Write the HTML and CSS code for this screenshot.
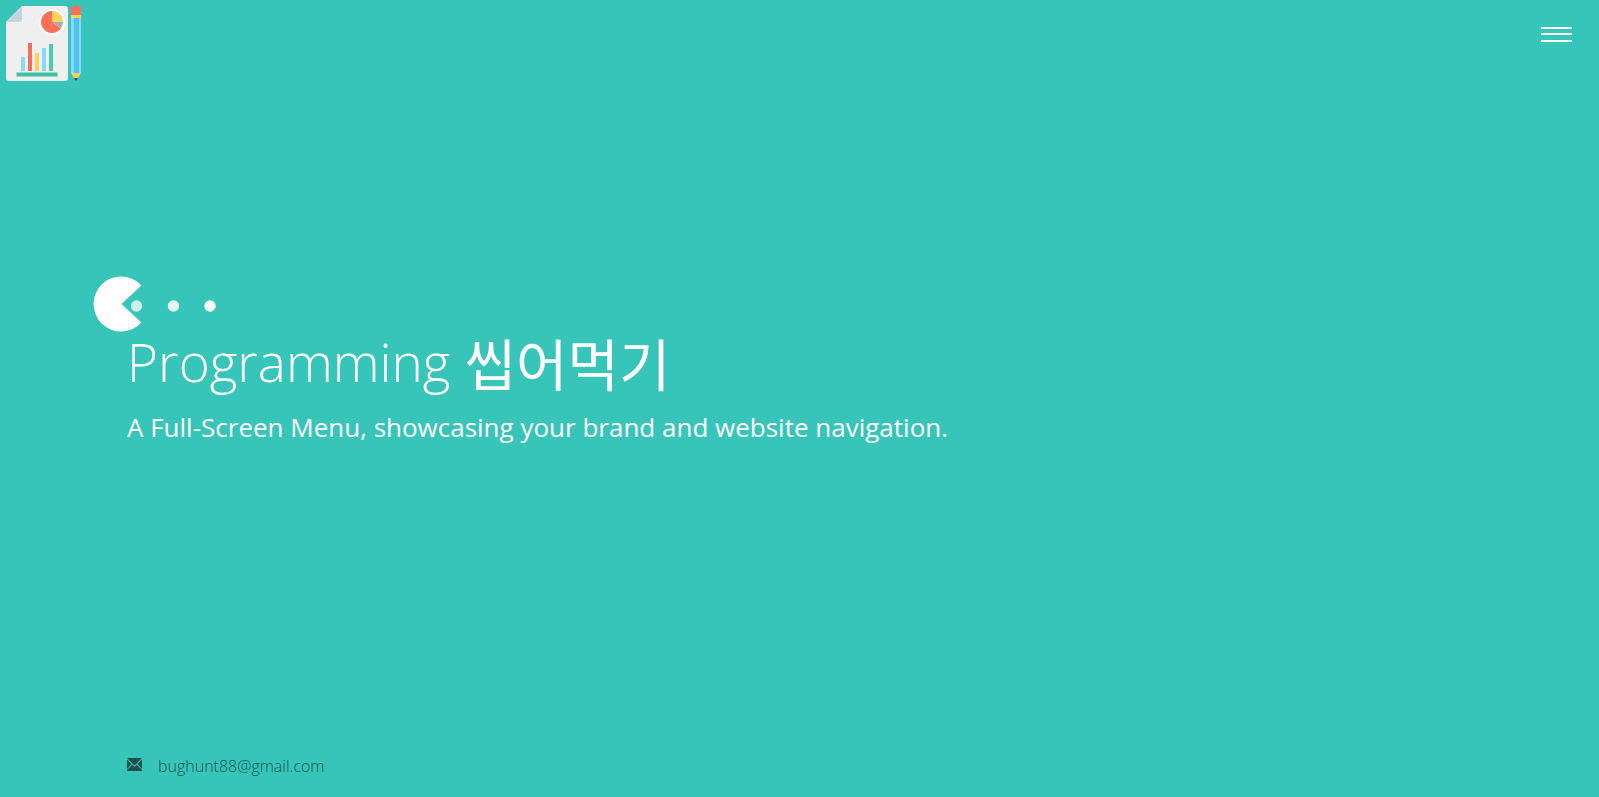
FILE: index.html
```html
<!DOCTYPE html>
<html lang="ko">
<head>
<meta charset="utf-8">
<title>Programming 씹어먹기</title>
<meta name="viewport" content="width=device-width, initial-scale=1">
<link rel="stylesheet" href="styles.css">
</head>
<body class="page">
<header class="header">
  <a class="logo" href="#" aria-label="Home">
    <svg width="90" height="90" viewBox="0 0 90 90">
      <path d="M22 6H65Q68 6 68 9V78Q68 81 65 81H9Q6 81 6 78V22Z" fill="#efefef"/>
      <path d="M22 6V19Q22 22 19 22H6Z" fill="#c9d1dd"/>
      <circle cx="52" cy="22" r="13" fill="#fff"/>
      <path d="M52 22V11A11 11 0 1 0 61 28.300Z" fill="#ff6f58"/>
      <path d="M52 22V11A11 11 0 0 1 63 22Z" fill="#ffd05b"/>
      <path d="M52 22H63A11 11 0 0 1 61 28.300Z" fill="#a5abb3"/>
      <path d="M21 57h4v14h-4z" fill="#84dbff"/>
      <path d="M28 43h4v28h-4z" fill="#f26f5a"/>
      <path d="M35 53h4v18h-4z" fill="#ffd05b"/>
      <path d="M42 48h4v23h-4z" fill="#84dbff"/>
      <path d="M49 44h4v27h-4z" fill="#4bcdb0"/>
      <path d="M16.500 72.500h41v4h-41z" fill="#40c0a7"/>
      <path d="M71 15V8Q71 6 73 6H79Q81 6 81 8V15Z" fill="#ff6f58"/>
      <path d="M71 15h10v3H71z" fill="#ffd05b"/>
      <path d="M71 18h10v55H71z" fill="#84dbff"/>
      <path d="M74 18h5v55h-5z" fill="#54c0eb"/>
      <path d="M71 73H81L78 78H74Z" fill="#ffd05b"/>
      <path d="M74 78h4l-2 3z" fill="#324a5e"/>
    </svg>
  </a>
  <button class="menu-button" type="button" aria-label="Open menu">
    <svg width="31" height="16" viewBox="0 0 31 16" fill="#fff">
      <path d="M0 0h31v2H0zM0 6h31v2H0zM0 13h31v2H0z"/>
    </svg>
  </button>
</header>
<main class="hero">
  <svg class="chomper" width="124" height="58" viewBox="0 0 124 58" fill="#fff" aria-hidden="true">
    <path d="M28.500 28L48.400 9.500A27.500 27.500 0 1 0 48.400 46.500Z"/>
    <circle cx="43.500" cy="30" r="5.700" fill="#cdf0ed"/>
    <circle cx="80.500" cy="30" r="5.700" fill="#e4f7f5"/>
    <circle cx="117" cy="30" r="5.700"/>
  </svg>
  <h1 class="title"><span>Programming</span> <span class="title-ko">씹어먹기</span></h1>
  <p class="tagline">A Full-Screen Menu, showcasing your brand and website navigation.</p>
</main>
<footer class="footer">
  <a class="contact" href="mailto:bughunt88@gmail.com">
    <svg class="contact-icon" width="15" height="13" viewBox="0 0 15 13" fill="#1b4f4a" aria-hidden="true">
      <path d="M0 0H15L7.500 7.500ZM0 1.500L4.500 6L0 11ZM15 1.500V11L10.500 6ZM5.300 6.800L7.500 9L9.700 6.800L15 12V13H0V12Z"/>
    </svg>
    <span>bughunt88@gmail.com</span>
  </a>
</footer>
</body>
</html>
```

FILE: styles.css
```css
* {
  box-sizing: border-box;
}

.page {
  display: flex;
  flex-direction: column;
  min-height: 100vh;
  margin: 0;
  background: #38c5b9;
  color: #fff;
  font-family: "Open Sans", "Noto Sans CJK KR", sans-serif;
}

.header {
  display: flex;
  justify-content: space-between;
  align-items: flex-start;
}

.logo,
.logo svg {
  display: block;
}

.menu-button {
  display: flex;
  margin: 17px 17px 0 0;
  padding: 10px;
  border: 0;
  background: none;
  cursor: pointer;
}

.hero {
  display: flex;
  flex: 1;
  flex-direction: column;
  justify-content: center;
  padding: 0 127px 122px;
}

.chomper {
  margin-left: -34px;
}

.title {
  display: flex;
  flex-wrap: wrap;
  align-items: center;
  gap: 14px;
  margin: 0;
  font-size: 53px;
  font-weight: 300;
  line-height: 56px;
}

.title-ko {
  font-family: "Noto Sans CJK KR", sans-serif;
  font-size: 56px;
  font-weight: 400;
}

.tagline {
  margin: 19px 0 0;
  font-size: 26px;
  line-height: 36px;
}

.footer {
  padding: 0 127px 19px;
}

.contact {
  display: inline-flex;
  align-items: center;
  gap: 16px;
  color: #14564f;
  font-size: 16px;
  font-weight: 300;
  line-height: 24px;
  text-decoration: none;
}

.contact-icon {
  margin-bottom: 4px;
}
```
